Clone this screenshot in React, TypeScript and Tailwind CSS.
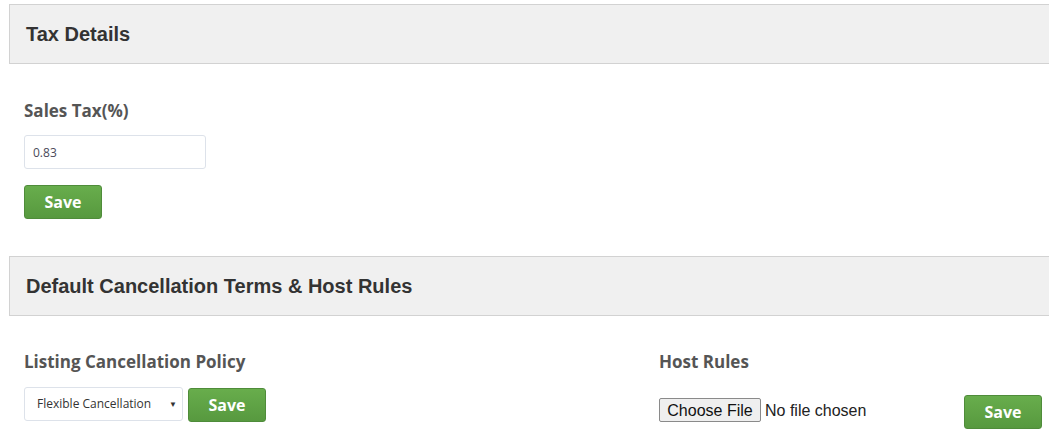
import React from "react";

function PanelHeader({ title }: { title: string }) {
  return (
    <div className="ml-[9px] flex h-[60px] items-center border border-r-0 border-[#d2d2d2] bg-[#f0f0f0] pl-[16px]">
      <h2 className="font-['Liberation_Sans',Arial,sans-serif] text-[20px] font-bold text-[#333]">{title}</h2>
    </div>
  );
}

function SaveButton() {
  return (
    <button
      type="button"
      className="h-[34px] w-[78px] rounded-[3px] border border-[#4f8c3a] bg-gradient-to-b from-[#68ad4c] to-[#57993f] font-['Open_Sans',sans-serif] text-[16px] font-bold text-white"
    >
      Save
    </button>
  );
}

function Label({ children }: { children: React.ReactNode }) {
  return (
    <div className="font-['Open_Sans',sans-serif] text-[17px] font-bold leading-[22px] text-[#555]">{children}</div>
  );
}

export default function App() {
  return (
    <div className="h-[442px] w-[1049px] overflow-hidden bg-white pt-[4px]">
      <PanelHeader title="Tax Details" />

      <div className="pl-[24px] pt-[36px]">
        <Label>Sales Tax(%)</Label>
        <input
          defaultValue="0.83"
          className="mt-[13px] block h-[34px] w-[182px] rounded-[3px] border border-[#dde2ea] px-[8px] font-['Open_Sans',sans-serif] text-[12px] text-[#4a4a5a] outline-none"
        />
        <div className="mt-[16px]">
          <SaveButton />
        </div>
      </div>

      <div className="mt-[37px]">
        <PanelHeader title="Default Cancellation Terms & Host Rules" />
      </div>

      <div className="flex pt-[35px]">
        <div className="w-[658px] shrink-0 pl-[24px]">
          <Label>Listing Cancellation Policy</Label>
          <div className="mt-[14px] flex items-start gap-[5px]">
            <div className="relative">
              <select className="h-[34px] w-[159px] appearance-none rounded-[3px] border border-[#dde2ea] bg-white pl-[12px] font-['Open_Sans',sans-serif] text-[12px] text-[#333] outline-none">
                <option>Flexible Cancellation</option>
                <option>Moderate Cancellation</option>
                <option>Strict Cancellation</option>
              </select>
              <span className="pointer-events-none absolute right-[6px] top-[11px] text-[8px] text-[#333]">▼</span>
            </div>
            <div className="pt-[1px]">
              <SaveButton />
            </div>
          </div>
        </div>
        <div className="flex-1 pl-[1px]">
          <Label>Host Rules</Label>
          <div className="mt-[22px] flex items-start">
            <input
              type="file"
              className="mt-[3px] w-[300px] font-['Liberation_Sans',Arial,sans-serif] text-[16px] text-[#222] file:mr-[4px] file:h-[24px] file:w-[102px] file:rounded-[2px] file:border file:border-[#8a8a8a] file:bg-[#efefef] file:text-[16px] file:text-[#111]"
            />
            <div className="ml-[5px]">
              <SaveButton />
            </div>
          </div>
        </div>
      </div>
    </div>
  );
}
